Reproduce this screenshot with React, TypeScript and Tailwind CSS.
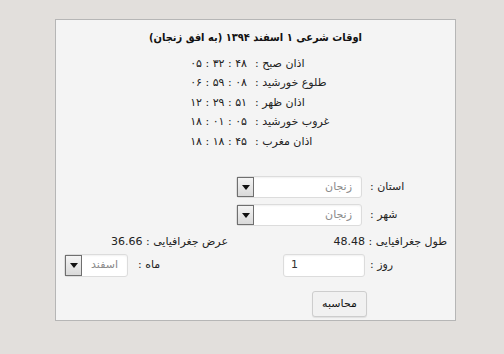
const times = [
  { label: "اذان صبح :", value: "۰۵ : ۳۲ : ۴۸" },
  { label: "طلوع خورشید :", value: "۰۶ : ۵۹ : ۰۸" },
  { label: "اذان ظهر :", value: "۱۲ : ۲۹ : ۵۱" },
  { label: "غروب خورشید :", value: "۱۸ : ۰۱ : ۰۵" },
  { label: "اذان مغرب :", value: "۱۸ : ۱۸ : ۴۵" },
];

const Arrow = () => (
  <div className="flex h-full w-[17px] shrink-0 items-center justify-center border border-[#6f6f6f] bg-gradient-to-b from-[#f4f4f4] to-[#d9d9d9]">
    <svg width="8" height="5" viewBox="0 0 8 5">
      <path d="M0 0h8L4 5z" fill="#111" />
    </svg>
  </div>
);

const Select = ({ value, className }: { value: string; className: string }) => (
  <div
    className={
      "flex h-full items-center rounded-[3px] border border-[#dcdcdc] bg-white shadow-[inset_0_1px_2px_rgba(0,0,0,0.06)] " +
      className
    }
  >
    <span className="flex-1 pr-[9px] text-right text-[#8a8a8a]">{value}</span>
    <Arrow />
  </div>
);

export default function App() {
  return (
    <div
      className="h-[354px] w-[504px] bg-[#e2dfdc] pl-[55px] pt-[19px] text-[11px] text-[#222]"
      style={{ fontFamily: '"DejaVu Sans", Tahoma, sans-serif' }}
    >
      <div className="flex h-[302px] w-[401px] flex-col border border-[#b6b6b6] bg-[#f4f4f4]">
        <div
          dir="rtl"
          className="pt-[10px] text-center text-[11px] font-bold leading-[16px] text-[#111]"
          style={{ fontFamily: '"DejaVu Sans Condensed", "DejaVu Sans", sans-serif' }}
        >
          اوقات شرعی ۱ اسفند ۱۳۹۴ (به افق زنجان)
        </div>

        <div className="ml-[134px] mt-[8px] grid grid-cols-[57px_auto] gap-x-[8px] leading-[19.4px]">
          {times.map((t) => (
            <div key={t.label} className="contents">
              <span dir="ltr" className="text-right">
                {t.value}
              </span>
              <span dir="rtl" className="text-left">
                {t.label}
              </span>
            </div>
          ))}
        </div>

        <div dir="rtl" className="mt-[25px] flex flex-col pr-[8px]">
          <div className="flex h-[22px] items-center">
            <span className="w-[81px] pl-[4px] text-left">استان :</span>
            <Select value="زنجان" className="mr-[4px] w-[126px]" />
          </div>
          <div className="mt-[6px] flex h-[22px] items-center">
            <span className="w-[81px] pl-[4px] text-left">شهر :</span>
            <Select value="زنجان" className="mr-[4px] w-[126px]" />
          </div>
          <div className="mt-[8px] flex h-[16px] items-center">
            <span className="w-[214px]">طول جغرافیایی : 48.48</span>
            <span className="pr-[5px]">عرض جغرافیایی : 36.66</span>
          </div>
          <div className="mt-[4px] flex h-[23px] items-center">
            <span className="w-[81px] pl-[4px] text-left">روز :</span>
            <div className="flex w-[133px]">
              <div
                dir="ltr"
                className="mr-[1px] flex h-[23px] w-[82px] items-center justify-start rounded-[3px] border border-[#dcdcdc] bg-white pl-[7px] shadow-[inset_0_1px_2px_rgba(0,0,0,0.06)]"
              >
                <span className="text-[#333]">1</span>
              </div>
            </div>
            <span className="w-[97px] pl-[2px] text-left">ماه :</span>
            <Select value="اسفند" className="mr-[8px] h-[23px] w-[64px]" />
          </div>
        </div>

        <div className="mt-[14px] flex justify-end pr-[88px]">
          <button className="h-[26px] w-[55px] rounded-[3px] border border-[#cdcdcd] bg-[#f1f1f1] text-[11px] text-[#111] shadow-[0_1px_1px_rgba(0,0,0,0.08)]">
            محاسبه
          </button>
        </div>
      </div>
    </div>
  );
}
